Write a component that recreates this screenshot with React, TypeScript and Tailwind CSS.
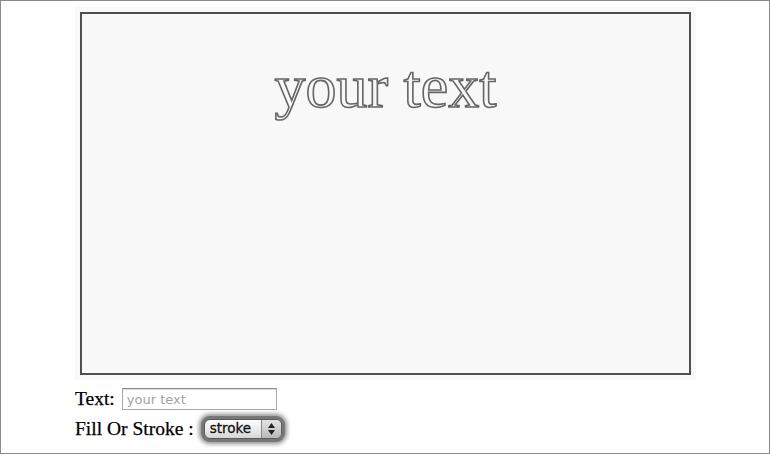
const serif = "font-['Liberation_Serif','Times_New_Roman',serif]";

const StrokeSelect = () => {
  return (
    <div className="ml-[7px] rounded-[9px] p-[3px] shadow-[0_0_4px_2px_rgba(70,70,70,0.6)] bg-[#777]">
      <div className="flex h-[20px] w-[78px] items-stretch overflow-hidden rounded-[6px] border border-[#5a5a5a] bg-gradient-to-b from-[#fdfdfd] via-[#ececec] to-[#d6d6d6]">
        <span className="flex flex-1 items-center pl-[5px] font-['DejaVu_Sans',sans-serif] text-[13.5px] leading-none text-[#111] [-webkit-text-stroke:0.3px_#111]">
          stroke
        </span>
        <span className="flex w-[20px] flex-col items-center justify-center gap-[2px] border-l border-[#8a8a8a] bg-gradient-to-b from-[#e4e4e4] to-[#b9b9b9]">
          <svg width="7" height="5" viewBox="0 0 7 5">
            <path d="M3.5 0 L7 5 L0 5 Z" fill="#222" />
          </svg>
          <svg width="7" height="5" viewBox="0 0 7 5">
            <path d="M0 0 L7 0 L3.5 5 Z" fill="#222" />
          </svg>
        </span>
      </div>
    </div>
  );
};

const App = () => {
  return (
    <div className="h-[454px] w-[770px] overflow-hidden border border-[#8a8a8a] bg-white pl-[74px] pt-[6px]">
      <div className="w-[621px] bg-[#f9f9f9] p-[5px]">
        <div className="flex h-[363px] w-[611px] justify-center border-2 border-[#4f4f4f] bg-[#f8f8f8]">
          <span className={`${serif} mt-[41px] text-[62px] leading-[62px] text-transparent [-webkit-text-stroke:1.6px_#666]`}>
            your text
          </span>
        </div>
      </div>
      <div className={`${serif} mt-[8px] flex items-center text-[19.5px] leading-none text-black [-webkit-text-stroke:0.25px_#000]`}>
        <span>Text:</span>
        <input
          type="text"
          placeholder="your text"
          className="ml-[7px] h-[22px] w-[155px] border border-[#a9a9a9] border-t-[#8c8c8c] bg-white px-[4px] font-['DejaVu_Sans',sans-serif] text-[13px] text-[#333] outline-none placeholder:text-[#a3a3a3] shadow-[inset_0_1px_1px_rgba(0,0,0,0.15)] [-webkit-text-stroke:0]"
        />
      </div>
      <div className={`${serif} mt-[6px] flex items-center text-[19.5px] leading-none text-black`}>
        <span className="[-webkit-text-stroke:0.25px_#000]">Fill Or Stroke :</span>
        <StrokeSelect />
      </div>
    </div>
  );
};

export default App;
